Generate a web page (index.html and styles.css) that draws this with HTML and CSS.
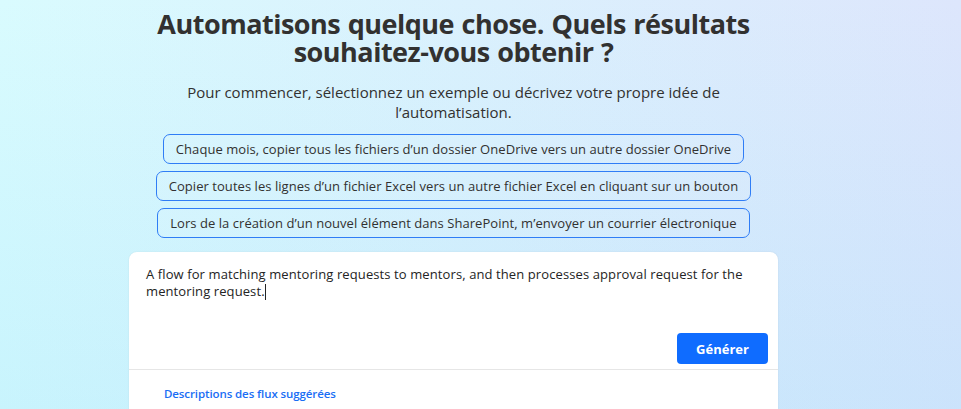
FILE: index.html
```html
<!DOCTYPE html>
<html lang="fr">
<head>
<meta charset="utf-8">
<title>Automatisons quelque chose</title>
<link rel="stylesheet" href="styles.css">
</head>
<body>
<main class="column">
  <h1 class="title">Automatisons quelque chose. Quels résultats souhaitez-vous obtenir ?</h1>
  <p class="subtitle">Pour commencer, sélectionnez un exemple ou décrivez votre propre idée de l’automatisation.</p>
  <div class="chips">
    <button class="chip">Chaque mois, copier tous les fichiers d’un dossier OneDrive vers un autre dossier OneDrive</button>
    <button class="chip">Copier toutes les lignes d’un fichier Excel vers un autre fichier Excel en cliquant sur un bouton</button>
    <button class="chip">Lors de la création d’un nouvel élément dans SharePoint, m’envoyer un courrier électronique</button>
  </div>
  <section class="card">
    <div class="composer">
      <p class="prompt">A flow for matching mentoring requests to mentors, and then processes approval request for the mentoring request.<span class="caret"></span></p>
      <div class="actions"><button class="generate">Générer</button></div>
    </div>
    <div class="suggested">
      <a class="suggested-link" href="#">Descriptions des flux suggérées</a>
    </div>
  </section>
</main>
</body>
</html>
```

FILE: styles.css
```css
html, body {
  margin: 0;
  height: 100%;
  overflow: hidden;
}
body {
  font-family: "Open Sans", "Noto Sans", sans-serif;
  color: #323130;
  background:
    linear-gradient(to bottom, rgba(132, 216, 250, 0) 0%, rgba(132, 216, 250, 0.2) 100%),
    linear-gradient(to right, #d9fbfe 0%, #dde6fc 100%);
}
.column {
  width: 649px;
  margin-left: 129px;
  display: flex;
  flex-direction: column;
  align-items: center;
  padding-top: 10px;
}
.title {
  margin: 0;
  font-size: 27px;
  line-height: 28px;
  font-weight: 700;
  text-align: center;
  width: 630px;
  letter-spacing: -0.5px;
  word-spacing: 1px;
  color: #323130;
}
.subtitle {
  margin: 16px 0 0;
  width: 560px;
  font-size: 15px;
  line-height: 20px;
  text-align: center;
  color: #323130;
}
.chips {
  display: flex;
  flex-direction: column;
  align-items: center;
  gap: 7px;
  margin-top: 12px;
}
.chip {
  font-family: inherit;
  font-size: 13px;
  line-height: 16px;
  letter-spacing: 0.05px;
  color: #323130;
  background: rgba(255, 255, 255, 0.08);
  border: 1px solid #2f7df6;
  border-radius: 7px;
  padding: 6px 12px;
  cursor: pointer;
}
.card {
  align-self: stretch;
  margin-top: 14px;
  background: #ffffff;
  border-radius: 8px 8px 0 0;
  box-shadow: 0 0 2px rgba(0, 0, 0, 0.08);
  height: 200px;
}
.composer {
  height: 118px;
  border-bottom: 1px solid #e6e6e6;
  display: flex;
  flex-direction: column;
  padding: 14px 10px 0 17px;
  box-sizing: border-box;
}
.prompt {
  margin: 0;
  font-size: 13px;
  line-height: 17px;
  letter-spacing: 0.1px;
  color: #242424;
  flex: 1;
}
.caret {
  display: inline-block;
  width: 1px;
  height: 16px;
  background: #242424;
  vertical-align: -4px;
}
.actions {
  display: flex;
  justify-content: flex-end;
  padding-bottom: 5px;
}
.generate {
  font-family: inherit;
  width: 91px;
  height: 31px;
  border: none;
  border-radius: 4px;
  background: #0f6cff;
  color: #ffffff;
  font-size: 13px;
  font-weight: 700;
  cursor: pointer;
}
.suggested {
  padding: 11px 35px;
}
.suggested-link {
  font-size: 11.5px;
  font-weight: 600;
  letter-spacing: -0.1px;
  color: #1a6ef5;
  text-decoration: none;
}
```
